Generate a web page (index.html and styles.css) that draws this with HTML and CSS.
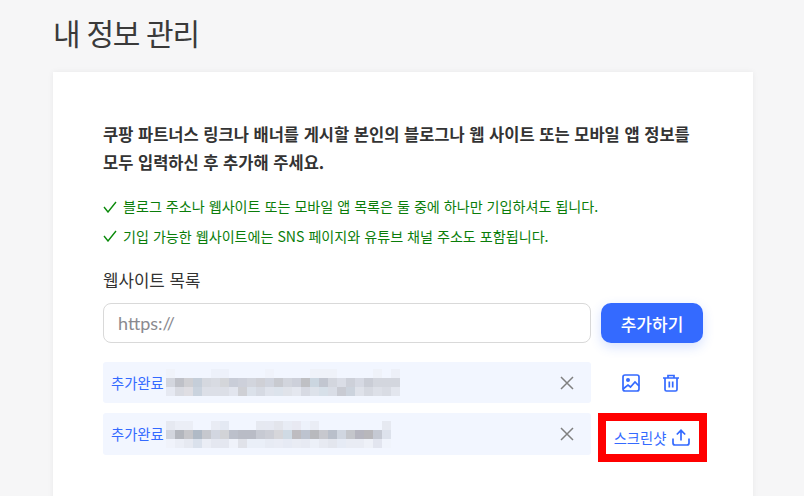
FILE: index.html
```html
<!DOCTYPE html>
<html lang="ko">
<head>
<meta charset="utf-8">
<title>내 정보 관리</title>
<link rel="stylesheet" href="styles.css">
</head>
<body>
<main class="page">
  <h1 class="title">내 정보 관리</h1>
  <section class="card">
    <p class="lead">쿠팡 파트너스 링크나 배너를 게시할 본인의 블로그나 웹 사이트 또는 모바일 앱 정보를<br>모두 입력하신 후 추가해 주세요.</p>
    <ul class="checks">
      <li class="check"><svg class="check-icon" viewBox="0 0 14 12"><path d="M1 6l4 5 8-10" /></svg>블로그 주소나 웹사이트 또는 모바일 앱 목록은 둘 중에 하나만 기입하셔도 됩니다.</li>
      <li class="check"><svg class="check-icon" viewBox="0 0 14 12"><path d="M1 6l4 5 8-10" /></svg>기입 가능한 웹사이트에는 SNS 페이지와 유튜브 채널 주소도 포함됩니다.</li>
    </ul>
    <div class="label">웹사이트 목록</div>
    <div class="rows">
      <div class="input">https://</div>
      <button class="add">추가하기</button>

      <div class="item item-first">
        <span class="done">추가완료</span>
        <svg class="blur" width="234" height="27" viewBox="0 0 26 3" shape-rendering="crispEdges">
          <rect x="0" y="0" width="1" height="1" fill="#f0f3fa"/><rect x="5" y="0" width="2" height="1" fill="#edf1fa"/><rect x="11" y="0" width="1" height="1" fill="#f0f3fb"/><rect x="16" y="0" width="3" height="1" fill="#eff2f9"/><rect x="23" y="0" width="1" height="1" fill="#eff2f9"/><rect x="25" y="0" width="1" height="1" fill="#edf0f8"/>
          <rect x="0" y="1" width="1" height="1" fill="#d3d6de"/><rect x="1" y="1" width="1" height="1" fill="#bfc1c8"/><rect x="2" y="1" width="1" height="1" fill="#cfcfd3"/><rect x="3" y="1" width="1" height="1" fill="#c5ced9"/><rect x="4" y="1" width="1" height="1" fill="#d5d8df"/><rect x="5" y="1" width="1" height="1" fill="#d8dbe2"/><rect x="6" y="1" width="1" height="1" fill="#d4d6da"/><rect x="7" y="1" width="1" height="1" fill="#c9cdd8"/><rect x="8" y="1" width="1" height="1" fill="#cdd0da"/><rect x="9" y="1" width="1" height="1" fill="#d2d5dd"/><rect x="10" y="1" width="1" height="1" fill="#cfd0d6"/><rect x="11" y="1" width="1" height="1" fill="#d0d4de"/><rect x="12" y="1" width="1" height="1" fill="#c8cad0"/><rect x="13" y="1" width="1" height="1" fill="#d2d5dd"/><rect x="14" y="1" width="1" height="1" fill="#cdd0da"/><rect x="15" y="1" width="1" height="1" fill="#bfc0c4"/><rect x="16" y="1" width="1" height="1" fill="#cbd6e0"/><rect x="17" y="1" width="1" height="1" fill="#c2c6d0"/><rect x="18" y="1" width="1" height="1" fill="#d3d6de"/><rect x="19" y="1" width="1" height="1" fill="#dadde6"/><rect x="20" y="1" width="1" height="1" fill="#cdd0d9"/><rect x="21" y="1" width="1" height="1" fill="#d6d9e3"/><rect x="22" y="1" width="1" height="1" fill="#cacdd6"/><rect x="23" y="1" width="1" height="1" fill="#d3d6de"/><rect x="24" y="1" width="2" height="1" fill="#d3d6de"/>
          <rect x="0" y="2" width="1" height="1" fill="#e6e9f2"/><rect x="1" y="2" width="1" height="1" fill="#d9dbe2"/><rect x="2" y="2" width="1" height="1" fill="#dfdee3"/><rect x="3" y="2" width="1" height="1" fill="#cad3de"/><rect x="4" y="2" width="3" height="1" fill="#dcdfe7"/><rect x="7" y="2" width="1" height="1" fill="#e2e5ee"/><rect x="8" y="2" width="1" height="1" fill="#cfd0d5"/><rect x="9" y="2" width="1" height="1" fill="#dbe1ea"/><rect x="10" y="2" width="1" height="1" fill="#d6dae3"/><rect x="11" y="2" width="1" height="1" fill="#dfe3ec"/><rect x="12" y="2" width="1" height="1" fill="#dce3ec"/><rect x="13" y="2" width="1" height="1" fill="#e0e3ea"/><rect x="14" y="2" width="1" height="1" fill="#e4e7ef"/><rect x="15" y="2" width="1" height="1" fill="#d7dae3"/><rect x="16" y="2" width="1" height="1" fill="#dde2ea"/><rect x="17" y="2" width="1" height="1" fill="#d7e0e9"/><rect x="18" y="2" width="1" height="1" fill="#d9dde6"/><rect x="19" y="2" width="1" height="1" fill="#c9cbd3"/><rect x="20" y="2" width="1" height="1" fill="#ccd3dd"/><rect x="21" y="2" width="1" height="1" fill="#dfe2ea"/><rect x="22" y="2" width="1" height="1" fill="#d6d9e1"/><rect x="23" y="2" width="1" height="1" fill="#dde0e8"/><rect x="24" y="2" width="1" height="1" fill="#d9dce4"/><rect x="25" y="2" width="1" height="1" fill="#e3e6ee"/>
        </svg>
        <svg class="close" viewBox="0 0 14 14"><path d="M1 1l12 12M13 1L1 13"/></svg>
      </div>
      <div class="actions">
        <svg class="action-icon" viewBox="0 0 18 18"><rect x="1" y="1" width="16" height="16" rx="2"/><circle class="dot" cx="6" cy="6" r="2"/><path d="M1 15l5-4 2.500 2 4.500-5 4 4"/></svg>
        <svg class="action-icon" viewBox="0 0 18 18"><path d="M1 4h16M6 4V1.500h6V4M3 4v11.500A1.500 1.500 0 0 0 4.500 17h9a1.500 1.500 0 0 0 1.500-1.500V4M7.300 7.500v6M10.700 7.500v6"/></svg>
      </div>

      <div class="item">
        <span class="done">추가완료</span>
        <svg class="blur" width="225" height="27" viewBox="0 0 25 3" shape-rendering="crispEdges">
          <rect x="0" y="0" width="1" height="1" fill="#e6e9f1"/><rect x="1" y="0" width="2" height="1" fill="#ebeef6"/><rect x="5" y="0" width="1" height="1" fill="#e9ecf4"/><rect x="6" y="0" width="1" height="1" fill="#e4e9f3"/><rect x="10" y="0" width="1" height="1" fill="#e6e9f1"/><rect x="11" y="0" width="1" height="1" fill="#e6e9f2"/><rect x="12" y="0" width="1" height="1" fill="#e3e5ec"/><rect x="13" y="0" width="1" height="1" fill="#e8ecf5"/><rect x="14" y="0" width="1" height="1" fill="#e8e9f2"/><rect x="15" y="0" width="1" height="1" fill="#edf2fb"/><rect x="16" y="0" width="1" height="1" fill="#eaedf5"/><rect x="24" y="0" width="1" height="1" fill="#e6e9f1"/>
          <rect x="0" y="1" width="1" height="1" fill="#d2d5dd"/><rect x="1" y="1" width="1" height="1" fill="#b3b6bd"/><rect x="2" y="1" width="1" height="1" fill="#c6c6ca"/><rect x="3" y="1" width="1" height="1" fill="#b0bac6"/><rect x="4" y="1" width="1" height="1" fill="#c6c8ce"/><rect x="5" y="1" width="1" height="1" fill="#d2d6e0"/><rect x="6" y="1" width="1" height="1" fill="#d2d3d7"/><rect x="7" y="1" width="1" height="1" fill="#bcc0cb"/><rect x="8" y="1" width="2" height="1" fill="#b9bcc6"/><rect x="10" y="1" width="1" height="1" fill="#c7cad3"/><rect x="11" y="1" width="1" height="1" fill="#ccced6"/><rect x="12" y="1" width="1" height="1" fill="#d6d6da"/><rect x="13" y="1" width="1" height="1" fill="#cfdae4"/><rect x="14" y="1" width="1" height="1" fill="#bebcc0"/><rect x="15" y="1" width="1" height="1" fill="#bdc3cf"/><rect x="16" y="1" width="1" height="1" fill="#b8b9bd"/><rect x="17" y="1" width="1" height="1" fill="#c7c8ce"/><rect x="18" y="1" width="1" height="1" fill="#b9bfca"/><rect x="19" y="1" width="1" height="1" fill="#d0d6e0"/><rect x="20" y="1" width="1" height="1" fill="#c4c6cb"/><rect x="21" y="1" width="1" height="1" fill="#b5b5bf"/><rect x="22" y="1" width="1" height="1" fill="#b8b7bb"/><rect x="23" y="1" width="1" height="1" fill="#c5c9d3"/><rect x="24" y="1" width="1" height="1" fill="#dde2ec"/>
          <rect x="0" y="2" width="1" height="1" fill="#f0f3fb"/><rect x="1" y="2" width="1" height="1" fill="#ebeef6"/><rect x="2" y="2" width="1" height="1" fill="#e6e9f1"/><rect x="3" y="2" width="1" height="1" fill="#dae1ec"/><rect x="4" y="2" width="1" height="1" fill="#eaedf5"/><rect x="5" y="2" width="2" height="1" fill="#e4e7f0"/><rect x="7" y="2" width="1" height="1" fill="#eff2fa"/><rect x="8" y="2" width="1" height="1" fill="#e0e2e9"/><rect x="9" y="2" width="2" height="1" fill="#eaeff8"/><rect x="11" y="2" width="1" height="1" fill="#e7ebf4"/><rect x="12" y="2" width="1" height="1" fill="#e9ecf5"/><rect x="13" y="2" width="1" height="1" fill="#e6eaf4"/><rect x="14" y="2" width="1" height="1" fill="#e9ecf4"/><rect x="15" y="2" width="1" height="1" fill="#e7eaf3"/><rect x="16" y="2" width="1" height="1" fill="#ecf0f8"/><rect x="17" y="2" width="1" height="1" fill="#e7eaf2"/><rect x="18" y="2" width="1" height="1" fill="#e3e6ee"/><rect x="19" y="2" width="1" height="1" fill="#e6ebf5"/><rect x="20" y="2" width="2" height="1" fill="#e9ecf4"/><rect x="22" y="2" width="1" height="1" fill="#eef1f8"/><rect x="23" y="2" width="1" height="1" fill="#e2e5ef"/><rect x="24" y="2" width="1" height="1" fill="#f0f4fc"/>
        </svg>
        <svg class="close" viewBox="0 0 14 14"><path d="M1 1l12 12M13 1L1 13"/></svg>
      </div>
      <div class="shot">
        <span class="shot-text">스크린샷</span>
        <svg class="shot-icon" viewBox="0 0 18 17"><path d="M1 9.500V14a2 2 0 0 0 2 2h12a2 2 0 0 0 2-2V9.500M9 11.500V1.500M4.800 5.500L9 1.300l4.200 4.200"/></svg>
      </div>
    </div>
  </section>
</main>
</body>
</html>
```
FILE: styles.css
```css
* { box-sizing: border-box; }
html, body { margin: 0; height: 100%; }
body {
  background: #f6f6f7;
  font-family: "Noto Sans CJK KR", "Noto Sans", sans-serif;
  color: #333;
  overflow: hidden;
}
.page { padding: 10px 51px 0 53px; height: 496px; overflow: hidden; }
.title {
  margin: 0 0 18px;
  font-size: 30px;
  line-height: 44px;
  font-weight: 400;
  letter-spacing: -1.300px;
  color: #3a3a3a;
}
.card {
  background: #fff;
  padding: 48px 50px 0;
  height: 460px;
  box-shadow: 0 0 6px rgba(0, 0, 0, 0.06);
}
.lead {
  margin: 0 0 16px;
  font-size: 16.500px;
  line-height: 28px;
  font-weight: 700;
  color: #333;
}
.checks { list-style: none; margin: 0 0 17px; padding: 0; }
.check {
  display: flex;
  align-items: center;
  font-size: 14.100px;
  line-height: 29.500px;
  color: #0a7d0a;
}
.check-icon {
  width: 14px;
  height: 12px;
  margin-right: 6px;
  fill: none;
  stroke: #0a8a0a;
  stroke-width: 1.400;
}
.label { font-size: 16.800px; line-height: 24px; color: #333; margin-bottom: 11px; }
.rows {
  display: grid;
  grid-template-columns: 488px 102px;
  column-gap: 10px;
  align-items: start;
}
.input {
  height: 40px;
  border: 1px solid #d9d9d9;
  border-radius: 8px;
  padding-left: 14px;
  font-family: Lato, sans-serif;
  font-size: 18px;
  line-height: 38px;
  color: #8a8a8f;
}
.add {
  height: 40px;
  border: 0;
  border-radius: 10px;
  background: #346aff;
  color: #fff;
  font: 500 17px/40px "Noto Sans CJK KR", sans-serif;
  box-shadow: 0 4px 12px rgba(52, 106, 255, 0.2);
}
.item {
  display: flex;
  align-items: center;
  height: 42px;
  padding: 0 17px 0 8px;
  background: #f2f6ff;
  border-radius: 3px;
  margin-top: 10px;
}
.item-first { margin-top: 19px; height: 41px; }
.done { font-size: 14.300px; color: #346aff; line-height: 20px; width: 55px; flex: none; }
.blur { flex: none; }
.close {
  margin-left: auto;
  width: 14px;
  height: 14px;
  fill: none;
  stroke: #808080;
  stroke-width: 1.500;
}
.actions {
  display: flex;
  justify-content: center;
  gap: 22px;
  margin-top: 31px;
  padding-right: 2px;
}
.action-icon {
  width: 18px;
  height: 18px;
  fill: none;
  stroke: #346aff;
  stroke-width: 1.700;
}
.action-icon .dot { fill: #346aff; stroke: none; }
.shot {
  display: flex;
  align-items: center;
  justify-content: center;
  gap: 6px;
  justify-self: center;
  width: 109px;
  height: 49px;
  margin-top: 10px;
  border: 8px solid #f00;
  background: #fff;
}
.shot-text {
  font-size: 14.300px;
  color: #346aff;
  line-height: 18px;
}
.shot-icon {
  width: 18px;
  height: 17px;
  fill: none;
  stroke: #346aff;
  stroke-width: 1.700;
}
```
